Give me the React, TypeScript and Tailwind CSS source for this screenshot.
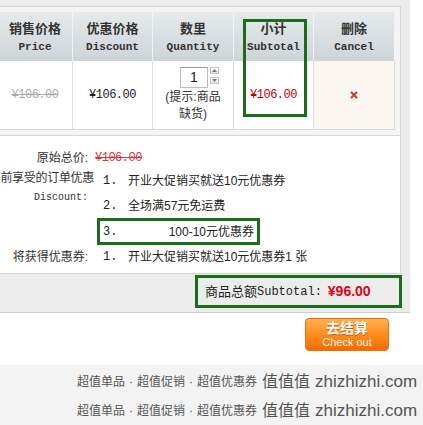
const cn = "font-['Liberation_Sans','Noto_Sans_CJK_SC',sans-serif]";
const mono = "font-['Liberation_Mono','Noto_Sans_CJK_SC',monospace]";
const green = "border-[#1b6d1b]";

const heads = [
  { cn: "销售价格", en: "Price", w: "w-[75px]" },
  { cn: "优惠价格", en: "Discount", w: "w-[80px]" },
  { cn: "数里", en: "Quantity", w: "w-[81px]" },
  { cn: "小计", en: "Subtotal", w: "w-[80px]" },
  { cn: "删除", en: "Cancel", w: "w-[81px]" },
];

function Spin({ up }: { up?: boolean }) {
  return (
    <div className="w-[9px] h-[7px] border border-[#c4c4c4] bg-gradient-to-b from-white to-[#e2e2e2] flex items-center justify-center">
      <svg width="5" height="3" viewBox="0 0 5 3">
        <path d={up ? "M2.5 0L5 3H0z" : "M0 0H5L2.5 3z"} fill="#777" />
      </svg>
    </div>
  );
}

export default function App() {
  return (
    <div className={`w-[423px] h-[425px] overflow-hidden bg-white text-[#333] ${cn}`}>
      <div className="relative -ml-[5px] w-[415px] bg-[#ececec] pt-[6px]">
        {/* cart table */}
        <div className="w-[406px] border-y border-r border-[#d6d6d6] bg-[#f4f4f4] pl-[3px] pr-[5px] pt-[5px] pb-[5px]">
          <div className="flex bg-gradient-to-b from-[#e6eaec] to-[#cdd4d8]">
            {heads.map((h) => (
              <div
                key={h.en}
                className={`${h.w} h-[49px] pt-[3px] flex flex-col items-center justify-center border-r border-[#f1f3f4]`}
              >
                <span className="text-[13px] font-bold leading-[18px]">{h.cn}</span>
                <span className={`${mono} text-[11px] font-bold leading-[18px]`}>{h.en}</span>
              </div>
            ))}
          </div>
          <div className="flex h-[69px] border-b border-[#d8d8d8]">
            <div className="w-[75px] bg-white border-r border-[#dedede] flex items-center justify-center">
              <span className={`${mono} text-[12px] tracking-[-0.5px] text-[#aaa] line-through`}>¥106.00</span>
            </div>
            <div className="w-[80px] bg-white border-r border-[#dedede] flex items-center justify-center">
              <span className={`${mono} text-[12px] tracking-[-0.5px] text-[#222]`}>¥106.00</span>
            </div>
            <div className="w-[81px] bg-white border-r border-[#dedede] flex flex-col pt-[6px]">
              <div className="flex ml-[27px]">
                <div className="w-[28px] h-[21px] border border-[#bdbdbd] border-t-[#9a9a9a] bg-white flex items-center justify-center text-[14px] text-[#222]">
                  1
                </div>
                <div className="ml-[2px] flex flex-col gap-[3px]">
                  <Spin up />
                  <Spin />
                </div>
              </div>
              <div className="mt-[1px] text-center text-[12px] leading-[17px]">
                (提示:商品
                <br />
                缺货)
              </div>
            </div>
            <div className="w-[80px] bg-white border-r border-[#dedede] flex items-center justify-center">
              <span className={`${mono} text-[12px] tracking-[-0.5px] text-[#c00000]`}>¥106.00</span>
            </div>
            <div className="w-[81px] bg-[#fbf6ef] border-r border-[#dedede] flex items-center justify-center">
              <svg width="8" height="8" viewBox="0 0 8 8">
                <path d="M1 1L7 7M7 1L1 7" stroke="#cc3e3e" strokeWidth="2.2" />
              </svg>
            </div>
          </div>
        </div>

        {/* order discounts */}
        <div className="w-[406px] h-[138px] border-b border-r border-[#d6d6d6] bg-white pt-[12px] text-[12px] text-[#222]">
          <div className="flex h-[20px] items-center">
            <div className="w-[99px] pr-[6px] text-right text-[#333]">原始总价:</div>
            <span className={`${mono} ml-[1px] text-[12px] tracking-[-0.5px] text-[#d33] line-through`}>¥106.00</span>
          </div>
          <div className="flex">
            <div className="w-[99px] text-[#333]">
              <div className="flex h-[20px] items-center justify-end whitespace-nowrap tracking-[-0.3px]">前享受的订单优惠</div>
              <div className={`${mono} flex h-[19px] items-center justify-end pr-[6px] text-[10px]`}>Discount:</div>
            </div>
            <div className="ml-[3px]">
              <div className="flex h-[25px] items-center pl-[6px]">
                <span className={`${mono} w-[25px]`}>1.</span>
                <span>开业大促销买就送10元优惠券</span>
              </div>
              <div className="flex h-[25px] items-center pl-[6px]">
                <span className={`${mono} w-[25px]`}>2.</span>
                <span>全场满57元免运费</span>
              </div>
              <div className={`flex h-[27px] w-[163px] items-center justify-between border-[3px] ${green} pl-[3px] pr-[3px]`}>
                <span className={mono}>3.</span>
                <span>100-10元优惠券</span>
              </div>
            </div>
          </div>
          <div className="flex h-[23px] items-center">
            <div className="w-[99px] pr-[6px] text-right text-[#333]">将获得优惠券:</div>
            <div className="ml-[3px] flex pl-[6px]">
              <span className={`${mono} w-[25px]`}>1.</span>
              <span>开业大促销买就送10元优惠券1 张</span>
            </div>
          </div>
        </div>

        {/* subtotal */}
        <div className="h-[39px] border-b border-[#cfcfcf] pt-[1px] flex justify-end pr-[8px]">
          <div className={`w-[207px] h-[33px] border-[3px] ${green} flex items-center pl-[7px] text-[13px] text-[#222]`}>
            <span>商品总额</span>
            <span className={`${mono} text-[12px]`}>Subtotal:</span>
            <span className="ml-[6px] text-[14px] font-bold text-[#e0001b]">¥96.00</span>
          </div>
        </div>

        {/* overlay on subtotal column */}
        <div className={`absolute left-[248px] top-[19px] w-[64px] h-[98px] border-[3px] ${green}`} />
      </div>

      <div className="ml-[305px] mt-[5px] mb-[14px] w-[84px] h-[33px] rounded-[4px] border border-[#e57214] bg-gradient-to-b from-[#ffb24c] via-[#ff8c1e] to-[#f06c02] flex flex-col items-center justify-center text-white">
        <span className="text-[14px] font-bold leading-[14px] [text-shadow:0_1px_0_#c85a00]">去结算</span>
        <span className="text-[11px] leading-[14px] text-[#fff4e4]">Check out</span>
      </div>

      <div className="h-[60px] bg-[#f3f3f3] pt-[7px] pl-[77px] flex flex-col gap-[9px] text-[#555]">
        {[0, 1].map((i) => (
          <div key={i} className="flex h-[20px] items-center whitespace-nowrap">
            <span className="text-[12px]">超值单品</span>
            <span className="w-[12px] text-center text-[12px]">·</span>
            <span className="text-[12px]">超值促销</span>
            <span className="w-[12px] text-center text-[12px]">·</span>
            <span className="text-[12px]">超值优惠券</span>
            <span className="ml-[5px] text-[16px]">值值值</span>
            <span className="ml-[5px] text-[17px]">zhizhizhi.com</span>
          </div>
        ))}
      </div>
    </div>
  );
}
